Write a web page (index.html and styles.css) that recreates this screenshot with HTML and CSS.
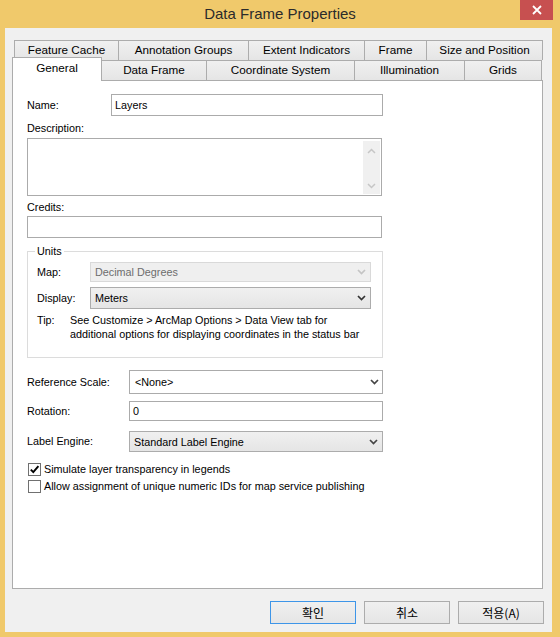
FILE: index.html
```html
<!DOCTYPE html>
<html>
<head>
<meta charset="utf-8">
<link rel="stylesheet" href="styles.css">
</head>
<body>
<div class="window">
  <div class="titlebar">
    <div class="title-spacer"></div>
    <div class="title">Data Frame Properties</div>
    <div class="close">
      <svg width="10" height="10" viewBox="0 0 10 10"><path d="M1 1 L9 9 M9 1 L1 9" stroke="#fff" stroke-width="1.8" fill="none"/></svg>
    </div>
  </div>
  <div class="client">
    <div class="tabs">
      <div class="tabrow back">
        <div class="tab w-fc">Feature Cache</div>
        <div class="tab w-ag">Annotation Groups</div>
        <div class="tab w-ei">Extent Indicators</div>
        <div class="tab w-fr">Frame</div>
        <div class="tab w-sp last">Size and Position</div>
      </div>
      <div class="tabrow front">
        <div class="tab selected w-ge">General</div>
        <div class="tab w-df">Data Frame</div>
        <div class="tab w-cs">Coordinate System</div>
        <div class="tab w-il">Illumination</div>
        <div class="tab w-gr last">Grids</div>
      </div>
    </div>
    <div class="panel">
      <div class="row r-name">
        <div class="lbl lbl-name">Name:</div>
        <div class="textbox tb-name">Layers</div>
      </div>
      <div class="lbl r-desc-lbl">Description:</div>
      <div class="textarea">
        <div class="ta-body"></div>
        <div class="vscroll">
          <svg width="9" height="6" viewBox="0 0 9 6"><path d="M1 5 L4.5 1.5 L8 5" stroke="#c6c6c6" stroke-width="1.5" fill="none"/></svg>
          <svg width="9" height="6" viewBox="0 0 9 6"><path d="M1 1 L4.5 4.5 L8 1" stroke="#c6c6c6" stroke-width="1.5" fill="none"/></svg>
        </div>
      </div>
      <div class="lbl r-cred-lbl">Credits:</div>
      <div class="textbox tb-cred"></div>

      <div class="group">
        <div class="legend">Units</div>
        <div class="row r-map">
          <div class="lbl lbl-unit">Map:</div>
          <div class="combo disabled c-unit">
            <span>Decimal Degrees</span>
            <svg width="9" height="6" viewBox="0 0 9 6"><path d="M1 1 L4.5 4.5 L8 1" stroke="#c4c4c4" stroke-width="1.7" fill="none"/></svg>
          </div>
        </div>
        <div class="row r-disp">
          <div class="lbl lbl-unit">Display:</div>
          <div class="combo c-unit c-disp">
            <span>Meters</span>
            <svg width="9" height="6" viewBox="0 0 9 6"><path d="M1 1 L4.5 4.5 L8 1" stroke="#333" stroke-width="1.7" fill="none"/></svg>
          </div>
        </div>
        <div class="tip">
          <div class="tip-lbl">Tip:</div>
          <div class="tip-text">See Customize &gt; ArcMap Options &gt; Data View tab for<br>additional options for displaying coordinates in the status bar</div>
        </div>
      </div>

      <div class="row r-ref">
        <div class="lbl lbl-wide">Reference Scale:</div>
        <div class="combo editable c-wide c-ref">
          <span>&lt;None&gt;</span>
          <svg width="9" height="6" viewBox="0 0 9 6"><path d="M1 1 L4.5 4.5 L8 1" stroke="#444" stroke-width="1.7" fill="none"/></svg>
        </div>
      </div>
      <div class="row r-rot">
        <div class="lbl lbl-wide">Rotation:</div>
        <div class="textbox tb-rot">0</div>
      </div>
      <div class="row r-eng">
        <div class="lbl lbl-wide">Label Engine:</div>
        <div class="combo c-wide c-eng">
          <span>Standard Label Engine</span>
          <svg width="9" height="6" viewBox="0 0 9 6"><path d="M1 1 L4.5 4.5 L8 1" stroke="#444" stroke-width="1.7" fill="none"/></svg>
        </div>
      </div>
      <div class="check r-chk1">
        <div class="box">
          <svg width="11" height="11" viewBox="0 0 11 11"><path d="M1.8 5.6 L4.3 8.2 L9.4 2.2" stroke="#000" stroke-width="1.9" fill="none"/></svg>
        </div>
        <span>Simulate layer transparency in legends</span>
      </div>
      <div class="check r-chk2">
        <div class="box"></div>
        <span>Allow assignment of unique numeric IDs for map service publishing</span>
      </div>
    </div>
    <div class="buttons">
      <div class="btn default">확인</div>
      <div class="btn">취소</div>
      <div class="btn">적용(A)</div>
    </div>
  </div>
</div>
</body>
</html>
```

FILE: styles.css
```css
html, body {
  margin: 0;
  padding: 0;
}
body {
  width: 560px;
  height: 637px;
  overflow: hidden;
  font-family: "Liberation Sans", Arial, sans-serif;
}
.window {
  width: 560px;
  height: 637px;
  background: #f0c96b;
  box-sizing: border-box;
}
.titlebar {
  height: 28px;
  display: flex;
  align-items: flex-start;
}
.title-spacer {
  width: 40px;
}
.title {
  flex: 1;
  text-align: center;
  font-size: 15px;
  line-height: 28px;
  color: #2b2b2b;
}
.close {
  width: 33px;
  height: 20px;
  margin-right: 7px;
  background: #c75050;
  display: flex;
  align-items: center;
  justify-content: center;
}
.client {
  margin-left: 5px;
  width: 547px;
  height: 604px;
  box-sizing: border-box;
  background: #f0f0f0;
  padding: 12px 9px 0 7px;
}
.tabs {
  width: 531px;
}
.tabrow {
  display: flex;
  height: 20px;
  align-items: flex-end;
}
.tabrow.back {
  padding-left: 2px;
}
.tab {
  box-sizing: border-box;
  height: 20px;
  border-top: 1px solid #acacac;
  border-left: 1px solid #acacac;
  background: linear-gradient(#f0f0f0, #e5e5e5);
  font-size: 11.7px;
  line-height: 17px;
  text-align: center;
  color: #000;
  white-space: nowrap;
}
.tab.last {
  border-right: 1px solid #acacac;
}
.tab.selected {
  height: 24px;
  margin-bottom: -1px;
  background: #fff;
  border-right: 1px solid #acacac;
  margin-right: -1px;
  position: relative;
  z-index: 2;
  line-height: 18px;
  padding-top: 1px;
}
.w-fc { width: 104px; }
.w-ag { width: 130px; }
.w-ei { width: 116px; }
.w-fr { width: 62px; }
.w-sp { width: 117px; }
.w-ge { width: 90px; }
.w-df { width: 105px; }
.w-cs { width: 148px; }
.w-il { width: 110px; }
.w-gr { width: 78px; }

.panel {
  width: 531px;
  height: 509px;
  box-sizing: border-box;
  border: 1px solid #acacac;
  background: #fff;
  padding: 13px 14px 0 14px;
  font-size: 10.8px;
  color: #000;
  position: relative;
  z-index: 1;
}
.row {
  display: flex;
  align-items: center;
}
.lbl {
  line-height: 13px;
  white-space: nowrap;
}
.lbl-name { width: 84px; }
.lbl-unit { width: 53px; }
.lbl-wide { width: 102px; }

.textbox {
  box-sizing: border-box;
  border: 1px solid #ababab;
  background: #fff;
  padding-left: 3px;
  display: flex;
  align-items: center;
}
.tb-name { width: 272px; height: 22px; }
.r-desc-lbl { margin-top: 6px; }
.textarea {
  margin-top: 3px;
  width: 355px;
  height: 58px;
  box-sizing: border-box;
  border: 1px solid #ababab;
  display: flex;
  padding: 2px 1px 1px 0;
}
.ta-body { flex: 1; }
.vscroll {
  width: 17px;
  background: #f0f0f0;
  display: flex;
  flex-direction: column;
  align-items: center;
  justify-content: space-between;
  padding: 7px 0 5px;
  box-sizing: border-box;
}
.r-cred-lbl { margin-top: 5px; }
.tb-cred { margin-top: 2px; width: 355px; height: 22px; }

.group {
  margin-top: 13px;
  width: 356px;
  height: 107px;
  box-sizing: border-box;
  border: 1px solid #dcdcdc;
  padding: 0 10px 0 9px;
}
.legend {
  display: block;
  width: max-content;
  height: 13px;
  margin-top: -7px;
  margin-left: -2px;
  padding: 0 2px;
  background: #fff;
  line-height: 13px;
}
.r-map { margin-top: 4px; }
.r-disp { margin-top: 5px; }
.combo {
  box-sizing: border-box;
  border: 1px solid #acacac;
  background: linear-gradient(#f0f0f0, #e5e5e5);
  display: flex;
  align-items: center;
  justify-content: space-between;
  padding: 0 4px 0 4px;
}
.combo svg { flex: none; }
.c-unit { width: 281px; }
.r-map .combo { height: 20px; }
.c-disp { height: 22px; }
.combo.disabled {
  background: #efefef;
  border-color: #d9d9d9;
  color: #6d6d6d;
}
.combo.editable {
  background: #fff;
  border-color: #ababab;
  padding-left: 5px;
  padding-right: 3px;
}
.tip {
  margin-top: 4px;
  display: flex;
  line-height: 14px;
}
.tip-lbl { width: 33px; }

.c-wide { width: 254px; }
.r-ref { margin-top: 12px; }
.c-ref { height: 24px; }
.r-rot { margin-top: 7px; }
.tb-rot { width: 254px; height: 20px; }
.r-eng { margin-top: 10px; }
.c-eng { height: 21px; }

.check {
  display: flex;
  align-items: center;
  line-height: 13px;
}
.r-chk1 { margin-top: 11px; }
.r-chk2 { margin-top: 4px; }
.box {
  width: 13px;
  height: 13px;
  box-sizing: border-box;
  border: 1px solid #707070;
  background: #fff;
  margin-left: 1px;
  margin-right: 3px;
  display: flex;
  align-items: center;
  justify-content: center;
}

.buttons {
  display: flex;
  justify-content: flex-end;
  gap: 8px;
  margin-top: 12px;
  margin-right: -1px;
}
.btn {
  width: 86px;
  height: 23px;
  box-sizing: border-box;
  border: 1px solid #acacac;
  background: linear-gradient(#f0f0f0, #e5e5e5);
  font-family: "Noto Sans CJK KR", "Liberation Sans", sans-serif;
  font-size: 12px;
  color: #000;
  display: flex;
  align-items: center;
  justify-content: center;
}
.btn.default {
  border-color: #3d95e8;
}
```
